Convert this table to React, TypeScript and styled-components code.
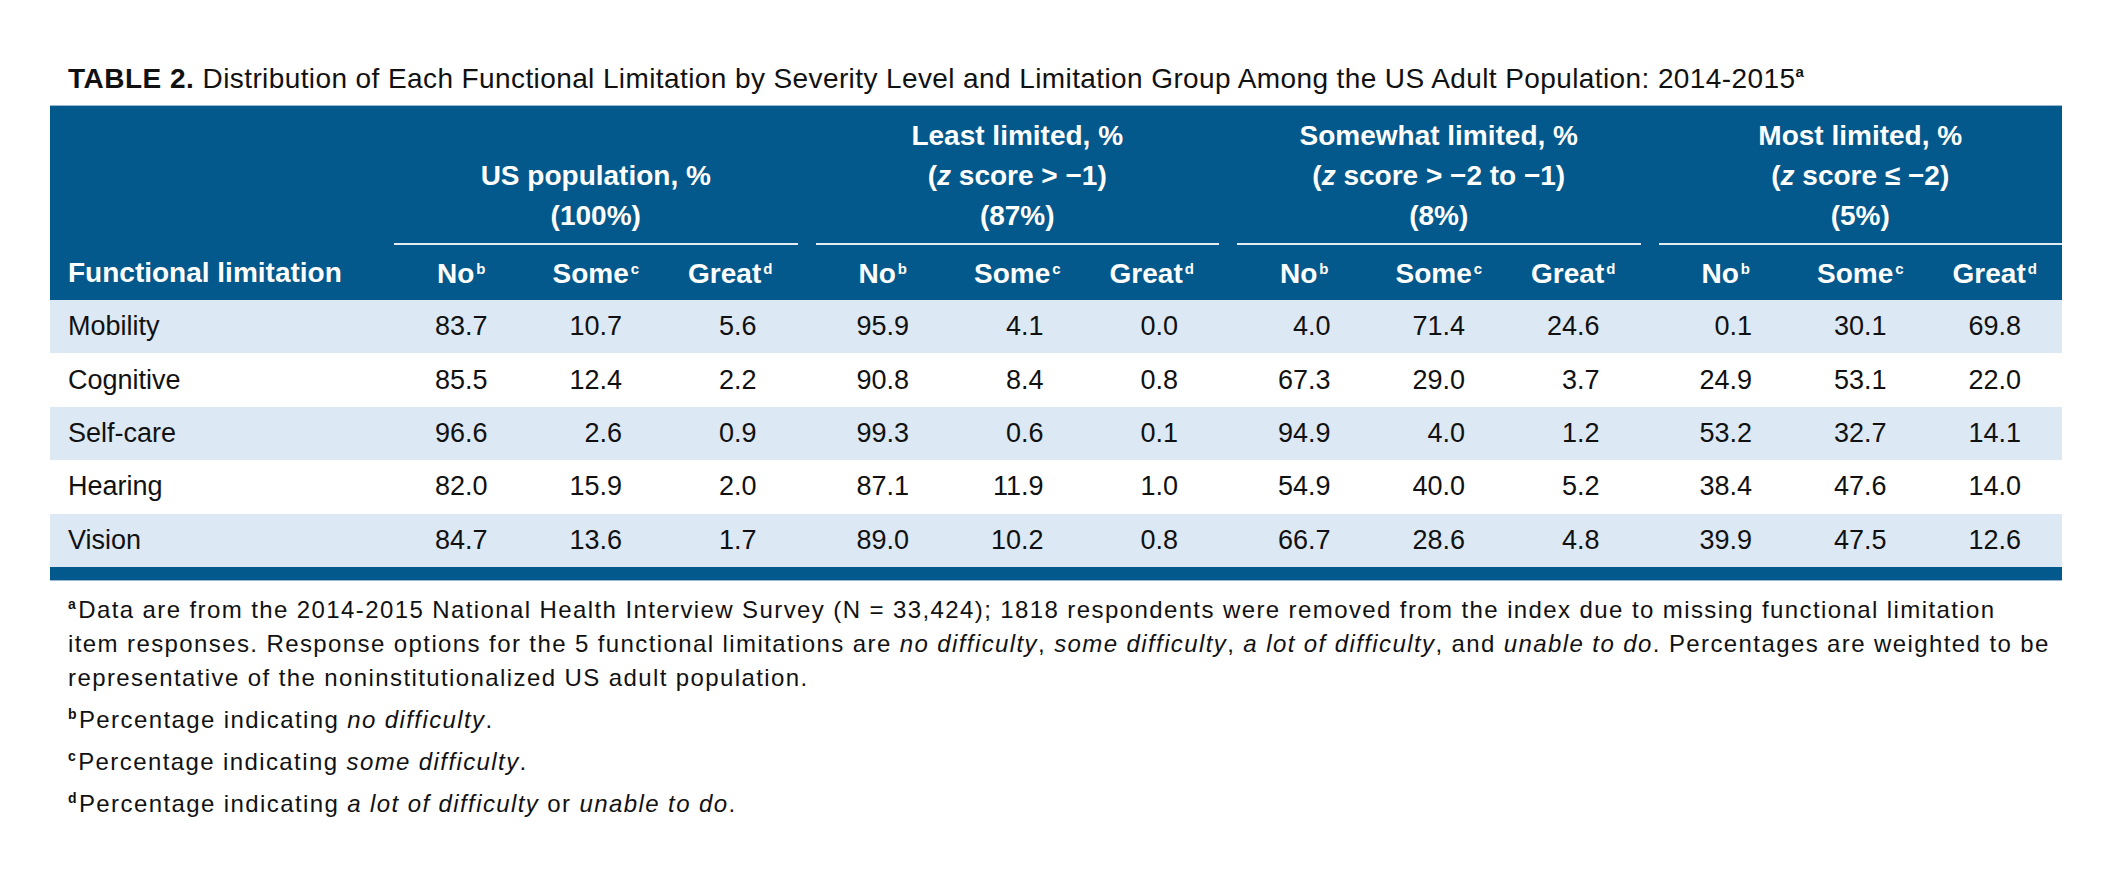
import styled, { createGlobalStyle } from "styled-components";

const GlobalStyle = createGlobalStyle`
  html, body {
    margin: 0;
    padding: 0;
    background: #ffffff;
  }
  body {
    font-family: "Liberation Sans", Arial, sans-serif;
    color: #111;
  }
`;

const BLUE = "#03598c";
const SHADE = "#dce8f4";
const EDGE = "#98b8d3";

type Group = { lines: React.ReactNode[] };

const groups: Group[] = [
  { lines: ["US population, %", "(100%)"] },
  {
    lines: [
      "Least limited, %",
      <>
        (<i>z</i> score &gt; −1)
      </>,
      "(87%)",
    ],
  },
  {
    lines: [
      "Somewhat limited, %",
      <>
        (<i>z</i> score &gt; −2 to −1)
      </>,
      "(8%)",
    ],
  },
  {
    lines: [
      "Most limited, %",
      <>
        (<i>z</i> score ≤ −2)
      </>,
      "(5%)",
    ],
  },
];

const rows: { name: string; values: string[] }[] = [
  { name: "Mobility", values: ["83.7", "10.7", "5.6", "95.9", "4.1", "0.0", "4.0", "71.4", "24.6", "0.1", "30.1", "69.8"] },
  { name: "Cognitive", values: ["85.5", "12.4", "2.2", "90.8", "8.4", "0.8", "67.3", "29.0", "3.7", "24.9", "53.1", "22.0"] },
  { name: "Self-care", values: ["96.6", "2.6", "0.9", "99.3", "0.6", "0.1", "94.9", "4.0", "1.2", "53.2", "32.7", "14.1"] },
  { name: "Hearing", values: ["82.0", "15.9", "2.0", "87.1", "11.9", "1.0", "54.9", "40.0", "5.2", "38.4", "47.6", "14.0"] },
  { name: "Vision", values: ["84.7", "13.6", "1.7", "89.0", "10.2", "0.8", "66.7", "28.6", "4.8", "39.9", "47.5", "12.6"] },
];

const subLabels = [
  { text: "No", mark: "b" },
  { text: "Some", mark: "c" },
  { text: "Great", mark: "d" },
];

export default function App() {
  return (
    <>
      <GlobalStyle />
      <Page>
        <Caption>
          <CaptionLabel>TABLE 2.</CaptionLabel> Distribution of Each Functional Limitation by Severity
          Level and Limitation Group Among the US Adult Population: 2014-2015<CapMark>a</CapMark>
        </Caption>
        <Table>
          <HeadTop>
            <span />
            {groups.map((g, i) => (
              <GroupHead key={i}>
                <GroupTitle>
                  {g.lines.map((l, j) => (
                    <div key={j}>{l}</div>
                  ))}
                </GroupTitle>
              </GroupHead>
            ))}
          </HeadTop>
          <HeadSub>
            <HeadLabel>Functional limitation</HeadLabel>
            {groups.map((_, i) => (
              <Triple key={i}>
                {subLabels.map((s) => (
                  <SubLabel key={s.text}>
                    {s.text}
                    <Mark>{s.mark}</Mark>
                  </SubLabel>
                ))}
              </Triple>
            ))}
          </HeadSub>
          {rows.map((r, i) => (
            <Row key={r.name} $shaded={i % 2 === 0}>
              <RowLabel>{r.name}</RowLabel>
              {[0, 1, 2, 3].map((g) => (
                <Triple key={g}>
                  {r.values.slice(g * 3, g * 3 + 3).map((v, k) => (
                    <Value key={k}>{v}</Value>
                  ))}
                </Triple>
              ))}
            </Row>
          ))}
          <BottomBar />
        </Table>
        <Notes>
          <Note>
            <NoteMark>a</NoteMark>Data are from the 2014-2015 National Health Interview Survey (N = 33,424); 1818
            respondents were removed from the index due to missing functional limitation
            <br />
            item responses. Response options for the 5 functional limitations are <i>no difficulty</i>,{" "}
            <i>some difficulty</i>, <i>a lot of difficulty</i>, and <i>unable to do</i>. Percentages are weighted to
            be
            <br />
            representative of the noninstitutionalized US adult population.
          </Note>
          <Note>
            <NoteMark>b</NoteMark>Percentage indicating <i>no difficulty</i>.
          </Note>
          <Note>
            <NoteMark>c</NoteMark>Percentage indicating <i>some difficulty</i>.
          </Note>
          <Note>
            <NoteMark>d</NoteMark>Percentage indicating <i>a lot of difficulty</i> or <i>unable to do</i>.
          </Note>
        </Notes>
      </Page>
    </>
  );
}

const Page = styled.main`
  width: 2012px;
  padding: 64px 50px 0;
`;

const Caption = styled.h1`
  margin: 0 0 11px 18px;
  font-size: 28px;
  line-height: 30px;
  font-weight: 400;
  letter-spacing: 0.4px;
  color: #111;
  white-space: nowrap;
`;

const CaptionLabel = styled.span`
  font-weight: 900;
  letter-spacing: 0.5px;
`;

const CapMark = styled.sup`
  font-size: 15px;
  line-height: 0;
  vertical-align: 11px;
  font-weight: 700;
`;

const Table = styled.section`
  border-top: 1px solid ${EDGE};
`;

const Grid = styled.div`
  display: grid;
  grid-template-columns: 326px repeat(4, 1fr);
`;

const HeadTop = styled(Grid)`
  background: ${BLUE};
  padding-top: 10px;
  align-items: end;
`;

const GroupHead = styled.div`
  padding-left: 18px;
`;

const GroupTitle = styled.div`
  color: #fff;
  font-size: 28px;
  font-weight: 700;
  line-height: 40px;
  text-align: center;
  padding-bottom: 7px;
  border-bottom: 2px solid #e3eaf1;
`;

const HeadSub = styled(Grid)`
  background: ${BLUE};
  height: 55px;
  align-items: center;
  color: #fff;
  font-size: 28px;
  font-weight: 700;
`;

const HeadLabel = styled.div`
  padding-left: 18px;
`;

const Triple = styled.div`
  padding-left: 18px;
  display: grid;
  grid-template-columns: repeat(3, 1fr);
  align-items: center;
`;

const SubLabel = styled.div`
  text-align: center;
  padding-top: 3px;
`;

const Mark = styled.sup`
  font-size: 15px;
  line-height: 0;
  vertical-align: 9px;
  margin-left: 2px;
`;

const Row = styled(Grid)<{ $shaded: boolean }>`
  height: 53.4px;
  align-items: center;
  background: ${({ $shaded }) => ($shaded ? SHADE : "#fff")};
  font-size: 27px;
  color: #111;
`;

const RowLabel = styled.div`
  padding-left: 18px;
`;

const Value = styled.div`
  text-align: right;
  padding-right: 41px;
`;

const BottomBar = styled.div`
  height: 13px;
  background: ${BLUE};
  border-bottom: 1px solid ${EDGE};
`;

const Notes = styled.div`
  margin-top: 12px;
  padding-left: 18px;
`;

const Note = styled.p`
  margin: 0 0 8px;
  font-size: 24px;
  line-height: 34px;
  letter-spacing: 1.4px;
  color: #111;
  white-space: nowrap;
`;

const NoteMark = styled.sup`
  font-size: 14px;
  font-weight: 700;
  line-height: 0;
  vertical-align: 9px;
  margin-right: 1px;
`;
